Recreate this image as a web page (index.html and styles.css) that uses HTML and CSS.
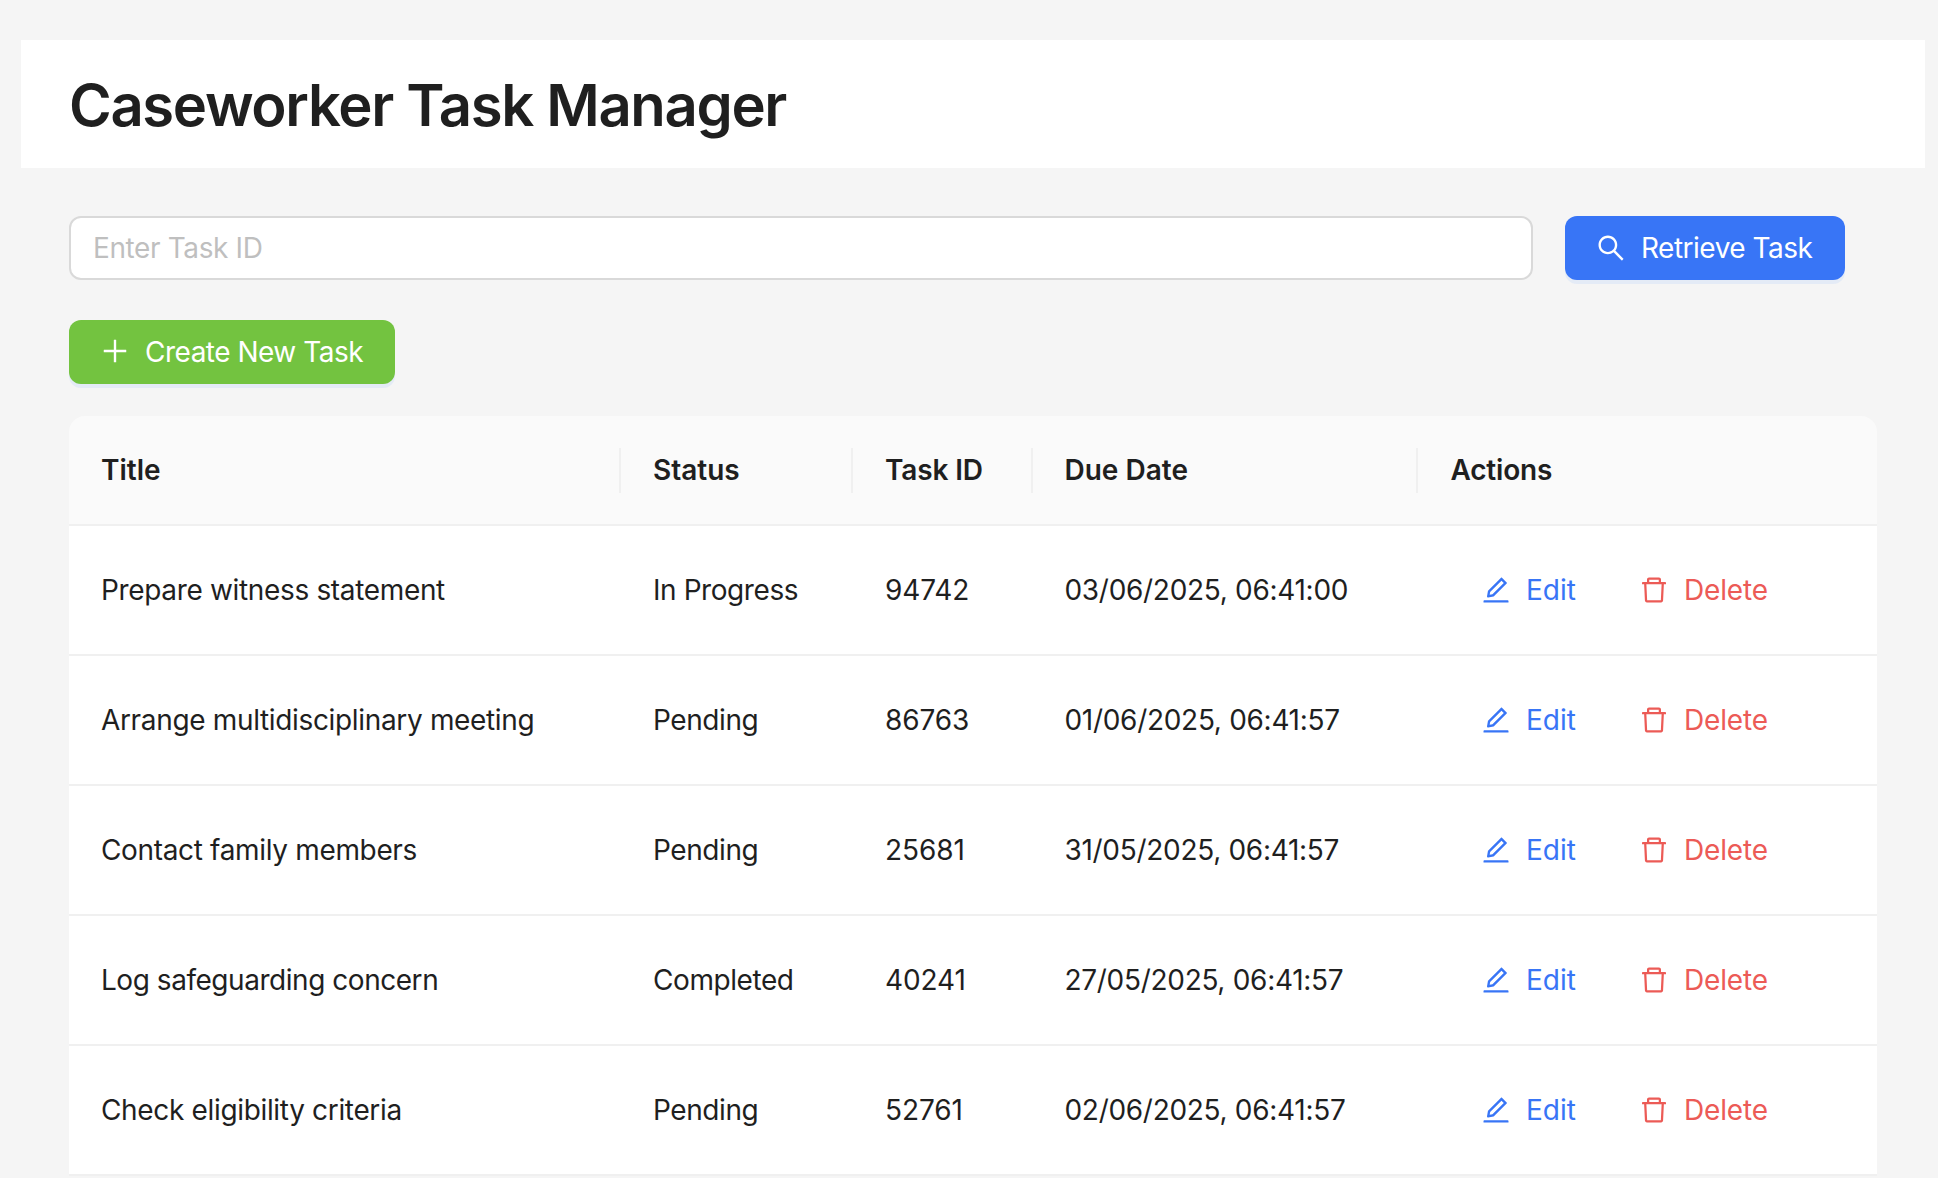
FILE: index.html
```html
<!DOCTYPE html>
<html lang="en">
<head>
<meta charset="utf-8">
<title>Caseworker Task Manager</title>
<link rel="stylesheet" href="styles.css">
</head>
<body>
<svg class="sprite" aria-hidden="true">
  <symbol id="search" viewBox="64 64 896 896"><path d="M909.6 854.5L649.9 594.8C690.2 542.7 712 479 712 412c0-80.2-31.3-155.4-87.9-212.1-56.6-56.7-132-87.9-212.1-87.9s-155.5 31.3-212.1 87.9C143.2 256.5 112 331.8 112 412c0 80.1 31.3 155.5 87.9 212.1C256.5 680.8 331.8 712 412 712c67 0 130.6-21.8 182.7-62l259.7 259.6a8.2 8.2 0 0011.6 0l43.6-43.5a8.2 8.2 0 000-11.6zM570.4 570.4C528 612.7 471.8 636 412 636s-116-23.3-158.4-65.6C211.3 528 188 471.8 188 412s23.3-116.1 65.6-158.4C296 211.3 352.2 188 412 188s116.1 23.2 158.4 65.6S636 352.2 636 412s-23.3 116.1-65.6 158.4z"/></symbol>
  <symbol id="plus" viewBox="64 64 896 896"><path d="M482 152h60q8 0 8 8v704q0 8-8 8h-60q-8 0-8-8V160q0-8 8-8z"/><path d="M192 474h672q8 0 8 8v60q0 8-8 8H160q-8 0-8-8v-60q0-8 8-8z"/></symbol>
  <symbol id="edit" viewBox="64 64 896 896"><path d="M257.7 752c2 0 4-.2 6-.5L431.9 722c2-.4 3.9-1.3 5.3-2.8l423.9-423.9a9.96 9.96 0 000-14.1L694.9 114.9c-1.9-1.9-4.4-2.9-7.1-2.9s-5.2 1-7.1 2.9L256.8 538.8c-1.5 1.5-2.4 3.3-2.8 5.3l-29.5 168.2a33.5 33.5 0 009.4 29.8c6.6 6.4 14.9 9.9 23.8 9.9zm67.4-174.4L687.8 215l73.3 73.3-362.7 362.6-88.9 15.7 15.6-89zM880 836H144c-17.7 0-32 14.3-32 32v36c0 4.4 3.6 8 8 8h784c4.4 0 8-3.6 8-8v-36c0-17.7-14.3-32-32-32z"/></symbol>
  <symbol id="delete" viewBox="64 64 896 896"><path d="M360 184h-8c4.4 0 8-3.6 8-8v8h304v-8c0 4.4 3.6 8 8 8h-8v72h72v-80c0-35.3-28.7-64-64-64H352c-35.3 0-64 28.7-64 64v80h72v-72zm504 72H160c-17.7 0-32 14.3-32 32v32c0 4.4 3.6 8 8 8h60.4l24.7 523c1.6 34.1 29.8 61 63.9 61h454c34.2 0 62.3-26.8 63.9-61l24.7-523H888c4.4 0 8-3.6 8-8v-32c0-17.7-14.3-32-32-32zM731.3 840H292.7l-24.2-512h487l-24.2 512z"/></symbol>
</svg>
<header class="header"><h1 class="heading">Caseworker Task Manager</h1></header>
<main class="content">
  <div class="search-row">
    <input class="input" type="text" placeholder="Enter Task ID">
    <button class="btn btn-primary"><svg class="icon"><use href="#search"/></svg><span>Retrieve Task</span></button>
  </div>
  <button class="btn btn-create"><svg class="icon"><use href="#plus"/></svg><span>Create New Task</span></button>
  <table class="table">
    <colgroup><col class="col-title"><col class="col-status"><col class="col-id"><col class="col-due"><col></colgroup>
    <thead>
      <tr><th><div class="th">Title</div></th><th><div class="th">Status</div></th><th><div class="th th-id">Task ID</div></th><th><div class="th th-due">Due Date</div></th><th><div class="th th-actions">Actions</div></th></tr>
    </thead>
    <tbody>
      <tr><td class="title">Prepare witness statement</td><td class="status">In Progress</td><td class="task-id">94742</td><td class="due">03/06/2025, 06:41:00</td><td><div class="actions"><button class="link link-edit"><svg class="icon"><use href="#edit"/></svg><span>Edit</span></button><button class="link link-delete"><svg class="icon"><use href="#delete"/></svg><span>Delete</span></button></div></td></tr>
      <tr><td class="title">Arrange multidisciplinary meeting</td><td class="status">Pending</td><td class="task-id">86763</td><td class="due">01/06/2025, 06:41:57</td><td><div class="actions"><button class="link link-edit"><svg class="icon"><use href="#edit"/></svg><span>Edit</span></button><button class="link link-delete"><svg class="icon"><use href="#delete"/></svg><span>Delete</span></button></div></td></tr>
      <tr><td class="title">Contact family members</td><td class="status">Pending</td><td class="task-id">25681</td><td class="due">31/05/2025, 06:41:57</td><td><div class="actions"><button class="link link-edit"><svg class="icon"><use href="#edit"/></svg><span>Edit</span></button><button class="link link-delete"><svg class="icon"><use href="#delete"/></svg><span>Delete</span></button></div></td></tr>
      <tr><td class="title title-tight">Log safeguarding concern</td><td class="status">Completed</td><td class="task-id">40241</td><td class="due">27/05/2025, 06:41:57</td><td><div class="actions"><button class="link link-edit"><svg class="icon"><use href="#edit"/></svg><span>Edit</span></button><button class="link link-delete"><svg class="icon"><use href="#delete"/></svg><span>Delete</span></button></div></td></tr>
      <tr><td class="title">Check eligibility criteria</td><td class="status">Pending</td><td class="task-id">52761</td><td class="due">02/06/2025, 06:41:57</td><td><div class="actions"><button class="link link-edit"><svg class="icon"><use href="#edit"/></svg><span>Edit</span></button><button class="link link-delete"><svg class="icon"><use href="#delete"/></svg><span>Delete</span></button></div></td></tr>
    </tbody>
  </table>
</main>
</body>
</html>
```

FILE: styles.css
```css
* { box-sizing: border-box; }
html { height: 100%; overflow: hidden; }
body {
  height: 100%;
  margin: 0;
  padding: 40px 13px 0 21px;
  overflow: hidden;
  background: #f5f5f5;
  color: #1f1f1f;
  font-family: Inter, "Liberation Sans", sans-serif;
  font-size: 28px;
  line-height: 44px;
}
.sprite { display: none; }
.header {
  height: 128px;
  padding: 0 48px;
  display: flex;
  align-items: center;
  background: #fff;
}
.heading {
  margin: 0;
  padding-top: 2px;
  font-size: 58px;
  line-height: 72px;
  font-weight: 600;
  letter-spacing: -1.35px;
}
.content { padding: 48px 48px 0; }
.search-row { display: flex; gap: 32px; padding-right: 32px; }
.input {
  flex: 1;
  min-width: 0;
  height: 64px;
  padding: 0 22px;
  border: 2px solid #d9d9d9;
  border-radius: 12px;
  background: #fff;
  font: inherit;
  letter-spacing: -0.38px;
}
.input::placeholder { color: #bfbfbf; opacity: 1; }
.btn {
  display: flex;
  align-items: center;
  gap: 16px;
  height: 64px;
  padding: 0 0 0 32px;
  border: 0;
  border-radius: 12px;
  box-shadow: 0 4px 0 #e4ebf6;
  color: #fff;
  font: inherit;
  letter-spacing: -0.5px;
  white-space: nowrap;
}
.btn-primary { width: 280px; background: #3875f6; }
.btn-create { width: 326px; margin-top: 40px; background: #73c340; }
.btn-create .icon { margin-bottom: 2px; }
.icon { width: 28px; height: 28px; fill: currentColor; flex: none; }
.table {
  width: 1808px;
  margin-top: 32px;
  table-layout: fixed;
  border-collapse: separate;
  border-spacing: 0;
}
.col-title { width: 552px; }
.col-status { width: 232px; }
.col-id { width: 180px; }
.col-due { width: 385px; }
th {
  height: 110px;
  padding: 0;
  background: #fafafa;
  border-bottom: 2px solid #f0f0f0;
  text-align: left;
  font-weight: 600;
}
.th { padding-left: 32px; border-right: 2px solid #f0f0f0; line-height: 45px; }
.th-id { letter-spacing: -0.15px; }
.th-due { padding-left: 31.5px; }
.th-actions { padding-left: 32.5px; border-right: 0; letter-spacing: -0.2px; }
th:first-child { border-top-left-radius: 16px; }
th:last-child { border-top-right-radius: 16px; }
td {
  height: 130px;
  padding: 0 0 0 32px;
  background: #fff;
  border-bottom: 2px solid #f0f0f0;
  white-space: nowrap;
}
.title { letter-spacing: -0.34px; }
.title-tight { letter-spacing: -0.46px; }
.status { letter-spacing: -0.43px; }
.task-id { letter-spacing: -0.1px; }
.due { padding-left: 31.5px; letter-spacing: -0.3px; }
.actions { display: flex; }
.link {
  display: flex;
  align-items: center;
  gap: 16px;
  height: 64px;
  padding: 0 0 0 32px;
  border: 0;
  background: none;
  font: inherit;
}
.link-edit { width: 158px; color: #3875f6; }
.link-delete { color: #ec5b56; letter-spacing: -0.15px; }
```
